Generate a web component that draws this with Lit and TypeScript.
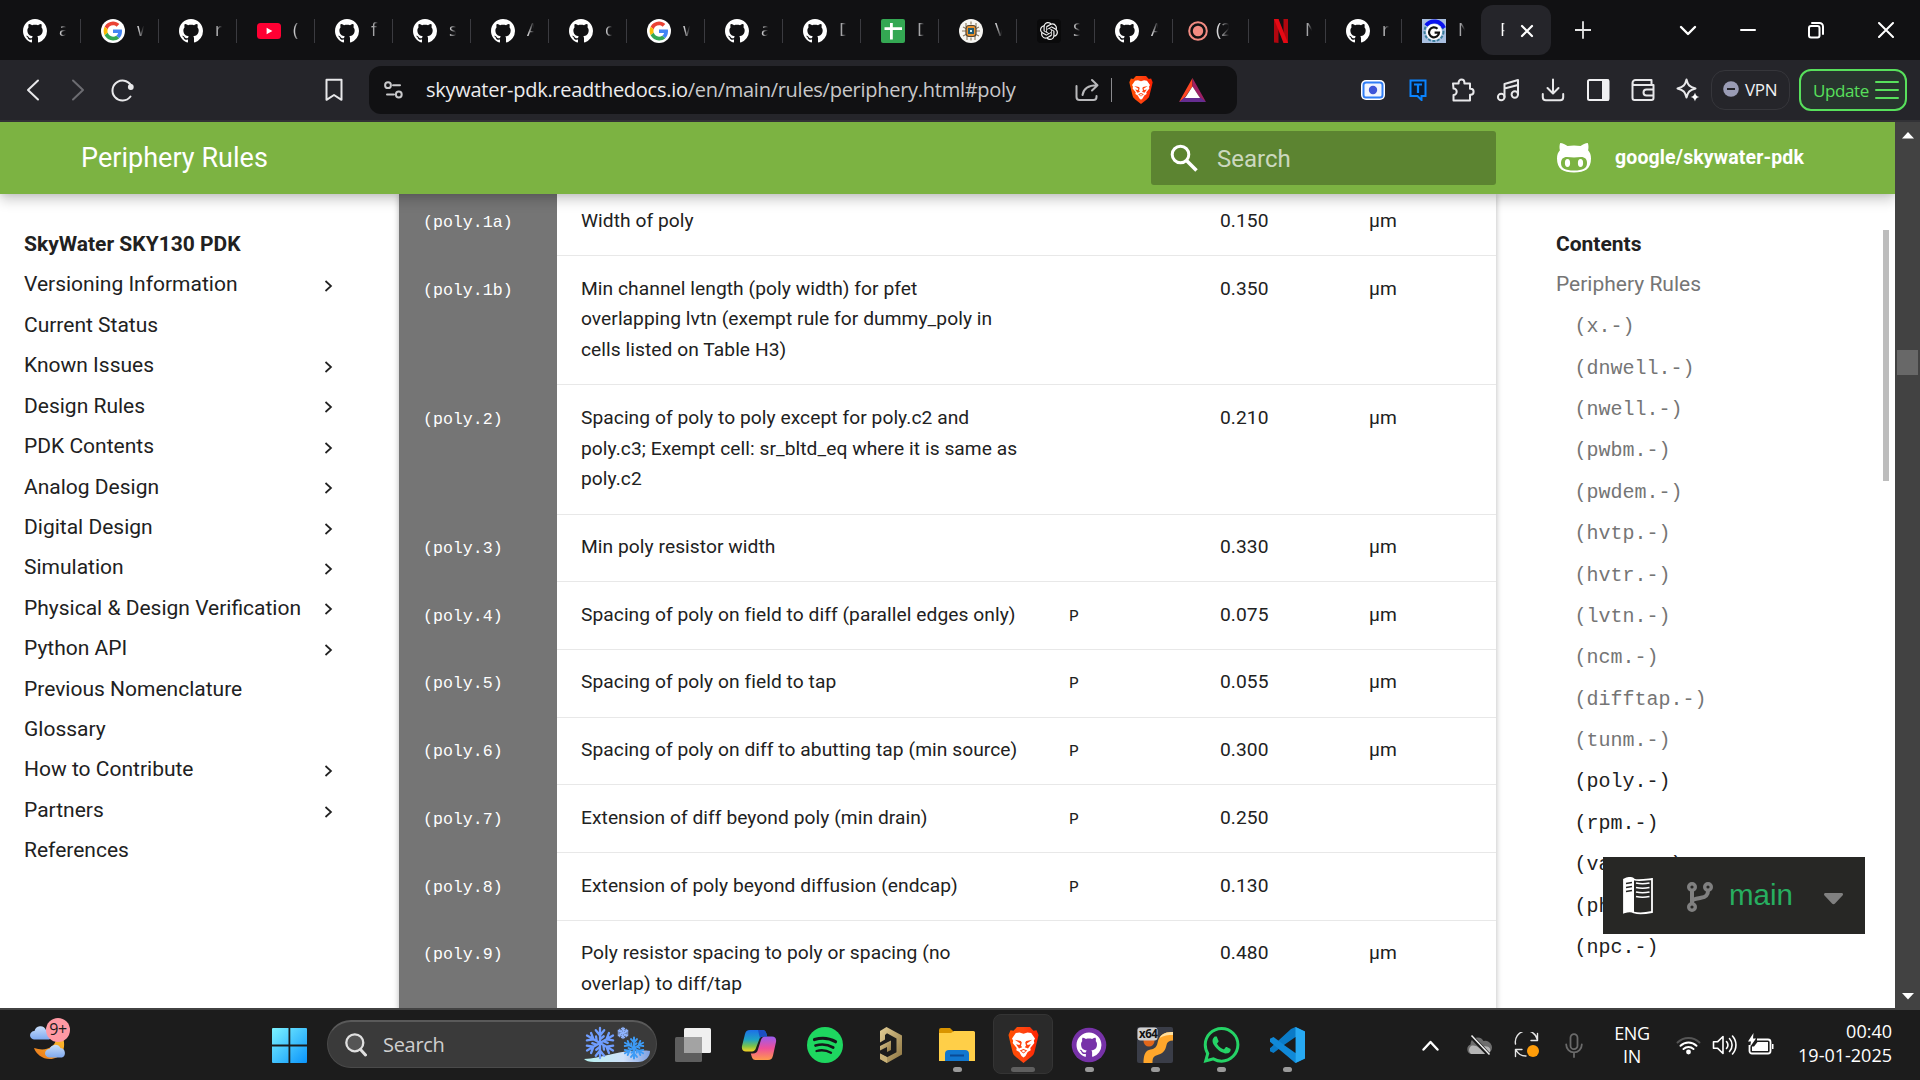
import { LitElement, html, css, svg, nothing, TemplateResult } from "lit";
import { customElement } from "lit/decorators.js";
import { classMap } from "lit/directives/class-map.js";

const GH =
  "M8 0C3.58 0 0 3.58 0 8c0 3.54 2.29 6.53 5.47 7.59.4.07.55-.17.55-.38 0-.19-.01-.82-.01-1.49-2.01.37-2.53-.49-2.69-.94-.09-.23-.48-.94-.82-1.13-.28-.15-.68-.52-.01-.53.63-.01 1.08.58 1.23.82.72 1.21 1.87.87 2.33.66.07-.52.28-.87.51-1.07-1.78-.2-3.64-.89-3.64-3.95 0-.87.31-1.59.82-2.15-.08-.2-.36-1.02.08-2.12 0 0 .67-.21 2.2.82.64-.18 1.32-.27 2-.27.68 0 1.36.09 2 .27 1.53-1.04 2.2-.82 2.2-.82.44 1.1.16 1.92.08 2.12.51.56.82 1.27.82 2.15 0 3.07-1.87 3.75-3.65 3.95.29.25.54.73.54 1.48 0 1.07-.01 1.93-.01 2.2 0 .21.15.46.55.38A8.013 8.013 0 0016 8c0-4.42-3.58-8-8-8z";
const OPENAI =
  "M22.2819 9.8211a5.9847 5.9847 0 0 0-.5157-4.9108 6.0462 6.0462 0 0 0-6.5098-2.9A6.0651 6.0651 0 0 0 4.9807 4.1818a5.9847 5.9847 0 0 0-3.9977 2.9 6.0462 6.0462 0 0 0 .7427 7.0966 5.98 5.98 0 0 0 .511 4.9107 6.051 6.051 0 0 0 6.5146 2.9001A5.9847 5.9847 0 0 0 13.2599 24a6.0557 6.0557 0 0 0 5.7718-4.2058 5.9894 5.9894 0 0 0 3.9977-2.9001 6.0557 6.0557 0 0 0-.7475-7.0729zm-9.022 12.6081a4.4755 4.4755 0 0 1-2.8764-1.0408l.1419-.0804 4.7783-2.7582a.7948.7948 0 0 0 .3927-.6813v-6.7369l2.02 1.1686a.071.071 0 0 1 .038.052v5.5826a4.504 4.504 0 0 1-4.4945 4.4944zm-9.6607-4.1254a4.4708 4.4708 0 0 1-.5346-3.0137l.142.0852 4.783 2.7582a.7712.7712 0 0 0 .7806 0l5.8428-3.3685v2.3324a.0804.0804 0 0 1-.0332.0615L9.74 19.9502a4.4992 4.4992 0 0 1-6.1408-1.6464zM2.3408 7.8956a4.485 4.485 0 0 1 2.3655-1.9728V11.6a.7664.7664 0 0 0 .3879.6765l5.8144 3.3543-2.0201 1.1685a.0757.0757 0 0 1-.071 0l-4.8303-2.7865A4.504 4.504 0 0 1 2.3408 7.872zm16.5963 3.8558L13.1038 8.364 15.1192 7.2a.0757.0757 0 0 1 .071 0l4.8303 2.7913a4.4944 4.4944 0 0 1-.6765 8.1042v-5.6772a.79.79 0 0 0-.407-.667zm2.0107-3.0231l-.142-.0852-4.7735-2.7818a.7759.7759 0 0 0-.7854 0L9.409 9.2297V6.8974a.0662.0662 0 0 1 .0284-.0615l4.8303-2.7866a4.4992 4.4992 0 0 1 6.6802 4.66zM8.3065 12.863l-2.02-1.1638a.0804.0804 0 0 1-.038-.0567V6.0742a4.4992 4.4992 0 0 1 7.3757-3.4537l-.142.0805L8.704 5.459a.7948.7948 0 0 0-.3927.6813zm1.0976-2.3654l2.602-1.4998 2.6069 1.4998v2.9994l-2.5974 1.4997-2.6067-1.4997Z";
const WHATSAPP =
  "M17.472 14.382c-.297-.149-1.758-.867-2.03-.967-.273-.099-.471-.148-.67.15-.197.297-.767.966-.94 1.164-.173.199-.347.223-.644.075-.297-.15-1.255-.463-2.39-1.475-.883-.788-1.48-1.761-1.653-2.059-.173-.297-.018-.458.13-.606.134-.133.298-.347.446-.52.149-.174.198-.298.298-.497.099-.198.05-.371-.025-.52-.075-.149-.669-1.612-.916-2.207-.242-.579-.487-.5-.669-.51-.173-.008-.371-.01-.57-.01-.198 0-.52.074-.792.372-.272.297-1.04 1.016-1.04 2.479 0 1.462 1.065 2.875 1.213 3.074.149.198 2.096 3.2 5.077 4.487.709.306 1.262.489 1.694.625.712.227 1.36.195 1.871.118.571-.085 1.758-.719 2.006-1.413.248-.694.248-1.289.173-1.413-.074-.124-.272-.198-.57-.347m-5.421 7.403h-.004a9.87 9.87 0 01-5.031-1.378l-.361-.214-3.741.982.998-3.648-.235-.374a9.86 9.86 0 01-1.51-5.26c.001-5.45 4.436-9.884 9.888-9.884 2.64 0 5.122 1.03 6.988 2.898a9.825 9.825 0 012.893 6.994c-.003 5.45-4.437 9.884-9.885 9.884m8.413-18.297A11.815 11.815 0 0012.05 0C5.495 0 .16 5.335.157 11.892c0 2.096.547 4.142 1.588 5.945L.057 24l6.305-1.654a11.882 11.882 0 005.683 1.448h.005c6.554 0 11.89-5.335 11.893-11.893a11.821 11.821 0 00-3.48-8.413Z";

const icon = (w: number, h: number, body: unknown, vb = `0 0 ${w} ${h}`) =>
  html`<svg width=${w} height=${h} viewBox=${vb} fill="none">${body}</svg>`;

const line = (d: string, color = "#e8e8ea", width = 2) =>
  svg`<path d=${d} stroke=${color} stroke-width=${width} stroke-linecap="round" stroke-linejoin="round"/>`;

const github = () => icon(24, 24, svg`<path fill="#fff" d=${GH}/>`, "0 0 16 16");
const google = () =>
  icon(24, 24, svg`<circle cx="12" cy="12" r="12" fill="#fff"/>
    <g transform="translate(2.6 2.6) scale(.392)">
    <path fill="#EA4335" d="M24 9.5c3.54 0 6.71 1.22 9.21 3.6l6.85-6.85C35.9 2.38 30.47 0 24 0 14.62 0 6.51 5.38 2.56 13.22l7.98 6.19C12.43 13.72 17.74 9.5 24 9.5z"/>
    <path fill="#4285F4" d="M46.98 24.55c0-1.57-.15-3.09-.38-4.55H24v9.02h12.94c-.58 2.96-2.26 5.48-4.78 7.18l7.73 6c4.51-4.18 7.09-10.36 7.09-17.65z"/>
    <path fill="#FBBC05" d="M10.53 28.59c-.48-1.45-.76-2.99-.76-4.59s.27-3.14.76-4.59l-7.98-6.19C.92 16.46 0 20.12 0 24c0 3.88.92 7.54 2.56 10.78l7.97-6.19z"/>
    <path fill="#34A853" d="M24 48c6.48 0 11.93-2.13 15.89-5.81l-7.73-6c-2.15 1.45-4.92 2.3-8.16 2.3-6.26 0-11.57-4.22-13.47-9.91l-7.98 6.19C6.51 42.62 14.62 48 24 48z"/></g>`);
const youtube = () =>
  icon(24, 24, svg`<rect x="0" y="4" width="24" height="16" rx="3.5" fill="#ff0033"/><path d="M9.6 8.8v6.4l5.8-3.2z" fill="#fff"/>`);
const sheets = () =>
  icon(24, 24, svg`<rect width="24" height="24" rx="2" fill="#34a853"/><path d="M3.5 9.7h17.5M10.4 4v16.5" stroke="#fff" stroke-width="2.8"/>`);
const chip = () =>
  icon(24, 24, svg`<circle cx="12" cy="12" r="12" fill="#f6f5f2"/>
    <path d="M7 4v4M4 8l4 2M3 12h4M4 17l4-2M8 21v-4M17 4v4M20 8l-4 2M21 12h-4M20 17l-4-2M16 21v-4M12 2.500v3M12 21.500v-3" stroke="#8b7a60" stroke-width="1.100"/>
    <rect x="7" y="6.500" width="10" height="11" rx="3" fill="#e8912d" stroke="#4d4438" stroke-width="1.200"/>
    <rect x="9" y="9" width="6" height="6" fill="#1f5a72"/><rect x="11" y="11" width="2" height="2" fill="#d6f0f4"/>`);
const openai = () =>
  icon(24, 24, svg`<rect width="24" height="24" rx="4" fill="#0a0a0b"/><g transform="translate(3 3) scale(.75)"><path fill="#f2f2f2" d=${OPENAI}/></g>`);
const record = () =>
  icon(20, 20, svg`<circle cx="10" cy="10" r="8.800" stroke="#f28b82" stroke-width="2"/><circle cx="10" cy="10" r="5.200" fill="#f28b82"/>`);
const netflix = () =>
  icon(16, 24, svg`<path d="M1 0h4.500v24L1 23.500zM10.500 0H15v24l-4.500-.5z" fill="#b1060f"/><path d="M1 0h4.500L15 24h-4.500z" fill="#e50914"/>`);
const gears = () =>
  icon(24, 24, svg`<rect width="24" height="24" fill="#a9bfe0"/><circle cx="12" cy="12.500" r="9.500" stroke="#3a7f9d" stroke-width="2" stroke-dasharray="3 1.500"/>
    <path d="M4 6.500A10.500 10.500 0 0 1 22 9" stroke="#0a12ee" stroke-width="4"/><circle cx="12" cy="13" r="8" fill="#fff"/>
    <path d="M15.500 9.800A5 5 0 1 0 17 13.600h-4.400" stroke="#111" stroke-width="2.200"/>`);

const lion = (w: number, h: number) =>
  icon(w, h, svg`<defs><linearGradient id="lg" x1="0" x2="1"><stop offset="0" stop-color="#ff5000"/><stop offset=".5" stop-color="#ff4410"/><stop offset="1" stop-color="#ff2000"/></linearGradient></defs>
    <path fill="url(#lg)" d="M8.500 0h13L25 3.700l3-.4L30 8l-1 4.500-3.200 13c-.5 2-1.500 3-3 4.300L15 36l-7.800-6.200c-1.500-1.300-2.500-2.300-3-4.300L1 12.500 0 8l2-4.700 3 .4z"/>
    <path fill="#fff" d="M15 6.800l-4-1.300-3.700.6L3.500 11.500l1.200 2.300-.5 2.200 4 5-.4 2.300 3 1.800L13 29l2 1.400L17 29l2.200-3.900 3-1.800-.4-2.300 4-5-.5-2.200 1.200-2.300-3.800-5.400-3.700-.6z"/>
    <path fill="#ff4410" d="M6.300 12.800l6 1.300 1 1.300-.8 3.400 1.200 1.400-3.200 1.300-3-4.200 3.400.7.800-1.600zM23.700 12.800l-6 1.300-1 1.300.8 3.400-1.200 1.400 3.200 1.300 3-4.200-3.400.7-.8-1.600zM11.300 23.600l3.700-1.700 3.700 1.700-3.700 2.900z"/>
    <path fill="#fff" d="M12.900 24l2.100-1 2.100 1-2.100 1.500z"/>`, "0 0 30 36");

const TABS: Array<[() => TemplateResult, string]> = [
  [github, "a"], [google, "w"], [github, "r"], [youtube, "("], [github, "f"], [github, "s"],
  [github, "A"], [github, "c"], [google, "w"], [github, "a"], [github, "D"], [sheets, "D"],
  [chip, "V"], [openai, "S"], [github, "A"], [record, "(2"], [netflix, "N"], [github, "r"], [gears, "N"],
];

const NAV: Array<[string, boolean]> = [
  ["Versioning Information", true], ["Current Status", false], ["Known Issues", true], ["Design Rules", true],
  ["PDK Contents", true], ["Analog Design", true], ["Digital Design", true], ["Simulation", true],
  ["Physical & Design Verification", true], ["Python API", true], ["Previous Nomenclature", false],
  ["Glossary", false], ["How to Contribute", true], ["Partners", true], ["References", false],
];

const RULES: Array<[string, string[], string, string, string]> = [
  ["(poly.1a)", ["Width of poly"], "", "0.150", "µm"],
  ["(poly.1b)", ["Min channel length (poly width) for pfet", "overlapping lvtn (exempt rule for dummy_poly in", "cells listed on Table H3)"], "", "0.350", "µm"],
  ["(poly.2)", ["Spacing of poly to poly except for poly.c2 and", "poly.c3; Exempt cell: sr_bltd_eq where it is same as", "poly.c2"], "", "0.210", "µm"],
  ["(poly.3)", ["Min poly resistor width"], "", "0.330", "µm"],
  ["(poly.4)", ["Spacing of poly on field to diff (parallel edges only)"], "P", "0.075", "µm"],
  ["(poly.5)", ["Spacing of poly on field to tap"], "P", "0.055", "µm"],
  ["(poly.6)", ["Spacing of poly on diff to abutting tap (min source)"], "P", "0.300", "µm"],
  ["(poly.7)", ["Extension of diff beyond poly (min drain)"], "P", "0.250", ""],
  ["(poly.8)", ["Extension of poly beyond diffusion (endcap)"], "P", "0.130", ""],
  ["(poly.9)", ["Poly resistor spacing to poly or spacing (no", "overlap) to diff/tap"], "", "0.480", "µm"],
];

const TOC: Array<[string, boolean]> = [
  ["(x.-)", true], ["(dnwell.-)", true], ["(nwell.-)", true], ["(pwbm.-)", true], ["(pwdem.-)", true],
  ["(hvtp.-)", true], ["(hvtr.-)", true], ["(lvtn.-)", true], ["(ncm.-)", true], ["(difftap.-)", true],
  ["(tunm.-)", true], ["(poly.-)", false], ["(rpm.-)", false], ["(varac.-)", false], ["(photo.-)", false], ["(npc.-)", false],
];

const TOOLS = [
  icon(24, 20, svg`<rect width="24" height="20" rx="5" fill="#fff"/><rect x="2.500" y="2.500" width="19" height="15" rx="2.500" fill="#f1f5ff" stroke="#2f7df6" stroke-width="2"/><circle cx="12" cy="10" r="4.200" fill="#3f56d8"/>`),
  icon(18, 22, svg`<path d="M1.500 1.500h15v15.500h-4v4l-4-4h-7z" fill="#0b1a30" stroke="#0a84ff" stroke-width="2"/><path d="M5 5.500h8M9 5.500v8.500" stroke="#0a84ff" stroke-width="2.200"/>`),
  icon(24, 24, line("M2 5.500h5.600V4.500a2.900 2.900 0 0 1 5.800 0v1H19v5.300h.6a3 3 0 0 1 0 6H19V22.500H2.500V17a3.200 3.200 0 0 0 0-6.400z")),
  icon(24, 24, svg`${line("M8.500 19V6L22 2v14M8.500 10.500L22 7")}<circle cx="5.200" cy="19" r="3.300" stroke="#e8e8ea" stroke-width="2"/><circle cx="18.800" cy="16.500" r="3.200" stroke="#e8e8ea" stroke-width="2"/>`),
  icon(24, 24, line("M12 1.500V15M6.500 10l5.500 5.500L17.500 10M1.800 16v3.200a3 3 0 0 0 3 3h14.400a3 3 0 0 0 3-3V16")),
  icon(24, 24, svg`<rect x="2" y="2" width="20.500" height="20" rx="1.500" stroke="#f0f0f2" stroke-width="2"/><rect x="16" y="1.500" width="7" height="21" fill="#f0f0f2"/>`),
  icon(24, 24, line("M20.500 7V2H4.500a3 3 0 0 0-3 3v15a2 2 0 0 0 2 2h17a2 2 0 0 0 2-2V7H3.500a2 2 0 0 1-2-2M22.500 11.500h-7a3 3 0 0 0 0 6h7")),
  icon(24, 24, svg`${line("M10.500 1.500c1.300 5.500 3 7.300 9 9-6 1.700-7.700 3.500-9 9-1.300-5.500-3-7.300-9-9 6-1.700 7.700-3.500 9-9z")}<path d="M19 14.500c.8 3 1.500 3.700 4.500 4.500-3 .8-3.700 1.500-4.500 4.500-.8-3-1.500-3.700-4.500-4.500 3-.8 3.700-1.500 4.500-4.500z" fill="#fff"/>`),
];

const flake = (x: number, y: number, r: number, color: string, w: number) => svg`<g transform="translate(${x} ${y})" stroke=${color} stroke-width=${w} stroke-linecap="round">
  ${[0, 60, 120, 180, 240, 300].map((a) => svg`<path transform="rotate(${a})" d="M0 0V${-r}M0 ${-r * 0.5}L${r * 0.28} ${-r * 0.85}M0 ${-r * 0.5}L${-r * 0.28} ${-r * 0.85}M0 ${-r * 0.25}L${r * 0.25} ${-r * 0.45}"/>`)}</g>`;

const APPS: Array<[TemplateResult, string]> = [
  [icon(36, 36, svg`<rect x="9" y="1" width="27" height="25" rx="1.500" fill="#f0f0f0"/><rect y="10" width="27" height="25" rx="1.500" fill="#5e5e5e"/><path d="M9 10h18v16H9z" fill="#a3a3a3"/>`), ""],
  [icon(36, 36, svg`<defs><linearGradient id="c1" x1="0" y1="0" x2="0" y2="1"><stop offset="0" stop-color="#1d6fe8"/><stop offset=".45" stop-color="#1fa3c4"/><stop offset=".75" stop-color="#7cc24a"/><stop offset="1" stop-color="#f7d323"/></linearGradient>
    <linearGradient id="c2" x1="0" y1="0" x2="0" y2="1"><stop offset="0" stop-color="#9a5cf0"/><stop offset=".5" stop-color="#ee4f9a"/><stop offset="1" stop-color="#ff9a4d"/></linearGradient></defs>
    <path d="M9 3h12.500c2 0 3 1 3.700 3l1 3.500h-4c-2.200 0-3.400 1-4 3L15 21c-.7 2.300-2 3.500-4 3.500H5c-3 0-4.600-1.500-4-5.500L4 7c.7-2.500 2-4 5-4z" fill="url(#c1)"/>
    <path d="M27 33H14.500c-2 0-3-1-3.700-3l-1-3.500h2c3.200 0 4.400-1.500 5-3.500l3-9.500c.7-2.500 2-4 4.500-4H31c3 0 4.600 2 4 5.500l-3 13.500c-.7 3-2 4.500-5 4.500z" fill="url(#c2)"/>
    <path d="M17 3h4.500c2 0 3 1 3.700 3l1 3.500h-4c-1.600 0-2.600.5-3.300 1.600z" fill="#1b4fc4"/>`), ""],
  [icon(36, 36, svg`<circle cx="18" cy="18" r="18" fill="#1ed760"/>${line("M7.500 12.500c7-2 15-1.300 21 2.200", "#15161a", 3.2)}${line("M8.500 18.500c6-1.700 12.500-1 17.700 2", "#15161a", 2.7)}${line("M9.500 24c5-1.400 10-.8 14.500 1.700", "#15161a", 2.3)}`), ""],
  [icon(24, 36, svg`<defs><linearGradient id="al" x1="0" y1="0" x2="1" y2="1"><stop offset="0" stop-color="#e2cd95"/><stop offset="1" stop-color="#8c7440"/></linearGradient></defs>
    <path d="M7.500 0L23 8.500v19L8 36l-7-4v-5.500l7 3.700 9.500-5V11.500L8 6.200 6 8v4.500l-5 3V4z" fill="url(#al)"/><path d="M12 13.500v9.500L8 25v-5l-7 3.500v-4.500z" fill="url(#al)"/><path d="M1 26.500V32l7 4v-6z" fill="#c9b278"/>`), ""],
  [icon(36, 34, svg`<path d="M0 2a2 2 0 0 1 2-2h9l4 4h19a2 2 0 0 1 2 2v6H0z" fill="#d99400"/><path d="M0 5h12l3-2h19.500A1.500 1.500 0 0 1 36 4.500V33H0z" fill="#ffcf48"/><path d="M6 33v-7a4 4 0 0 1 4-4h16a4 4 0 0 1 4 4v7z" fill="#1177cf"/><path d="M11 27.500h14" stroke="#0a4a94" stroke-width="2"/>`), "dot"],
  [lion(31, 36), "active"],
  [icon(36, 36, svg`<circle cx="18" cy="18" r="17.300" fill="#7732a8"/><g transform="translate(5.500 5.500) scale(1.560)"><path fill="#fff" d=${GH}/></g>`), "dot"],
  [html`<span class="x64">${icon(36, 36, svg`<rect width="36" height="36" rx="2" fill="#3a3d48"/><path d="M36 5c-9 0-14 3-15.500 11-1 5-4 6-8.500 7-4 1-5.500 6-5.500 13h9c0-5 1-7 5-8 6-1.500 8-5 9-10 .6-3 2.500-4.500 6.500-4.500z" fill="#ffa62b"/><path d="M36 5c-6 0-11 1-13.500 6 4-2.500 9-3 13.500-3z" fill="#ffe0a0"/><circle cx="12" cy="14" r="5.500" fill="#e2661a"/><rect x=".5" y=".5" width="20" height="13" rx="3" fill="#cfcfcf"/>`)}<b>x64</b></span>`, "dot"],
  [icon(37, 36, svg`<path fill="#25d366" d=${WHATSAPP}/>`, "0 0 24 24"), "dot"],
  [icon(36, 36, svg`<path d="M26.500 0L36 4.500v27L26.500 36 11 21 4.500 26 1 24.200v-3L22 2z" fill="#0a7bc7"/><path d="M26.500 36L1 14.800v-3L4.500 10 26 26z" fill="#1089d8"/><path d="M26.500 0L36 4.500v27L26.500 36z" fill="#27a9f2"/><path d="M26.500 10v16L15 18z" fill="#1c1c1c"/>`), "dot"],
];

@customElement("app-root")
class AppRoot extends LitElement {
  static styles = css`
    :host { display: block; width: 1920px; height: 1080px; overflow: hidden; background: #fff; font-family: Roboto, sans-serif; color: #212121; }
    * { box-sizing: border-box; }
    svg { display: block; flex: none; }
    .screen { display: flex; flex-direction: column; height: 1080px; }
    .ui { font-family: "Open Sans", "Noto Sans", sans-serif; }

    /* browser tabs */
    .tabs { display: flex; align-items: center; height: 60px; background: #111113; color: #d6d6d8; flex: none; }
    .tab { display: flex; align-items: center; width: 78px; height: 46px; padding: 2px 0 0 23px; font-size: 18px; flex: none; }
    .tab.rec { width: 76px; padding-left: 18px; }
    .tab.nf { width: 77px; padding-left: 27px; }
    .tab.late { width: 76px; }
    .tab.last { width: 82px; }
    .tab .letter { width: 16px; height: 28px; line-height: 24px; margin: 0 -4px 0 12px; white-space: nowrap; -webkit-mask-image: linear-gradient(90deg, #000 1px, transparent 7px); mask-image: linear-gradient(90deg, #000 1px, transparent 7px); }
    .tab.rec .letter { width: 18px; margin-left: 8px; -webkit-mask-image: linear-gradient(90deg, #000 3px, transparent 13px); mask-image: linear-gradient(90deg, #000 3px, transparent 13px); }
    .tab.nf .letter { margin-left: 16px; }
    .tab .sep { width: 1px; height: 24px; background: #3b3b40; margin: 0 -3px 0 auto; }
    .active-tab { display: flex; align-items: center; width: 70px; height: 50px; border-radius: 12px; background: #25252a; padding-left: 19px; flex: none; font-size: 18px; }
    .active-tab .letter { width: 14px; line-height: 26px; height: 28px; color: #fff; -webkit-mask-image: linear-gradient(90deg, #000 3px, transparent 5px); mask-image: linear-gradient(90deg, #000 3px, transparent 5px); }
    .active-tab svg { margin: 1px 0 0 6px; }
    .winctl { display: flex; align-items: center; flex: 1; }
    .winctl .c { display: flex; justify-content: center; }
    .winctl .min { margin-left: -12px; }

    /* toolbar */
    .bar { display: flex; align-items: center; height: 62px; background: #25252a; border-bottom: 2px solid #323236; flex: none; }
    .navbtns { display: flex; align-items: center; width: 369px; padding-left: 26px; }
    .url { display: flex; align-items: center; width: 868px; height: 48px; border-radius: 12px; background: #111113; padding: 0 29px 0 15px; font-size: 20px; color: #c8c8ca; white-space: nowrap; }
    .url .host { color: #ececee; }
    .url .addr { width: 634px; margin-left: 23px; line-height: 46px; height: 46px; letter-spacing: -.27px; }
    .url .vr { width: 1px; height: 24px; background: #8a8a8e; margin: 0 17px 0 12px; }
    .url .bat { margin-left: 26px; }
    .tools { display: flex; margin-left: 113px; }
    .tool { width: 45px; display: flex; justify-content: center; align-items: center; height: 30px; }
    .vpn { display: flex; align-items: center; width: 79px; height: 40px; border: 1px solid #36363b; border-radius: 14px; margin-left: 1px; padding: 0 0 2px 11px; gap: 6px; font-size: 17px; color: #f1f1f3; letter-spacing: -.3px; }
    .update { display: flex; align-items: center; width: 108px; height: 42px; margin-left: 9px; border: 2px solid #58e05c; border-radius: 12px; background: #28352e; color: #58e05c; font-size: 17px; padding-left: 12px; gap: 6px; letter-spacing: -.4px; }

    /* page */
    .page { display: flex; height: 886px; flex: none; }
    .doc { width: 1895px; display: flex; flex-direction: column; overflow: hidden; }
    .head { display: flex; align-items: center; height: 72px; background: #7cb342; color: #fff; flex: none; box-shadow: 0 0 6px rgba(0,0,0,.1), 0 6px 12px rgba(0,0,0,.2); z-index: 2; padding-left: 81px; }
    .title { font-size: 27px; width: 1070px; line-height: 72px; letter-spacing: .03px; }
    .search { display: flex; align-items: center; width: 345px; height: 54px; border-radius: 3px; background: #5c8431; padding-left: 19px; font-size: 24px; color: rgba(255,255,255,.7); }
    .search span { margin: 1px 0 0 19px; }
    .repo { display: flex; align-items: center; margin-left: 61px; font-size: 19.500px; font-weight: 700; letter-spacing: .13px; }
    .repo span { margin: -2px 0 0 24px; }
    .body { display: flex; flex: 1; min-height: 0; }
    .side { width: 399px; padding: 37px 0 0 24px; font-size: 21px; line-height: 27.300px; flex: none; }
    .side .row { display: flex; justify-content: space-between; align-items: center; width: 309px; margin-top: 13.125px; }
    .side b, .toc b { display: block; font-weight: 700; }
    .side svg { margin-top: 2px; }

    .content { width: 1097px; flex: none; overflow: hidden; box-shadow: 0 0 6px rgba(0,0,0,.28); height: 820px; }
    .rule { display: grid; grid-template-columns: 158px 488px 151px 149px 151px; font-size: 19.200px; line-height: 30.720px; letter-spacing: .06px; }
    .rule > div { padding: 17.500px 0 18.500px 24px; border-top: 1px solid #e8e8e8; white-space: nowrap; }
    .rule:first-child > div { border-top: none; padding-top: 12px; }
    .rule .name { background: #757575; border-top-color: #757575; color: #fff; }
    .mono { font-family: "Liberation Mono", monospace; font-size: 16.600px; line-height: 1; letter-spacing: 0; }

    .toc { flex: 1; padding: 37px 0 0 60px; font-size: 21px; line-height: 27.300px; position: relative; }
    .toc .first { margin: 13.125px 0 14.600px; color: #757575; }
    .toc .item { font-family: "Liberation Mono", monospace; font-size: 20px; line-height: 28px; margin: 0 0 13.380px 18.500px; }
    .toc .grey { color: #757575; }
    .toc .track { position: absolute; left: 387px; top: 36px; width: 6px; height: 251px; background: #bdbdbd; }
    .badge { position: absolute; left: 107px; top: 663px; width: 262px; height: 77px; background: #272725; display: flex; align-items: center; padding-left: 20px; font-family: "Liberation Sans", Arial, sans-serif; font-size: 29.500px; color: #27ae60; }
    .badge .branch { margin: 2px 0 0 33px; }
    .badge .name { margin: -2px 0 0 15px; width: 95px; }
    .badge .caret { margin-top: 7px; }
    .scroll { width: 25px; background: #424242; display: flex; flex-direction: column; align-items: center; padding-top: 10px; }
    .scroll .thumb { width: 21px; height: 25px; background: #686868; margin-top: 211px; }
    .scroll .down { margin: 618px 0 0; }

    /* taskbar */
    .task { display: flex; align-items: center; height: 72px; background: #1c1c1c; border-top: 2px solid #424242; color: #fff; flex: none; }
    .weather { width: 42px; height: 42px; margin: 0 0 12px 30px; position: relative; }
    .weather .count { position: absolute; left: 16px; top: 0; width: 24px; height: 24px; border-radius: 50%; background: #ff99a4; color: #1c1c1c; font-size: 16px; line-height: 23px; text-align: center; letter-spacing: -.3px; }
    .win { margin-left: 200px; }
    .find { display: flex; align-items: center; width: 330px; height: 48px; margin: 0 0 2px 20px; border-radius: 24px; background: #3a3a3a; border: 1px solid #4a4a4a; border-top: 2px solid #5a5a5a; padding-left: 17px; font-size: 20px; color: #cfcfcf; letter-spacing: -.3px; }
    .find .txt { width: 202px; margin-left: 16px; }
    .find .txt + svg { margin-left: -1px; }
    .apps { display: flex; margin-left: 3px; }
    .app { width: 66px; height: 70px; padding: 4px 3px; }
    .app .cell { height: 60px; border-radius: 8px; display: flex; align-items: center; flex-direction: column; justify-content: space-between; padding: 12px 0 1px; border: 1px solid transparent; }
    .app.active .cell { background: #2a2a2a; border-color: #343434; }
    .app .mark { width: 9px; height: 5px; border-radius: 3px; }
    .app.dot .mark { background: #9a9a9a; }
    .app.active .mark { background: #5f5f5f; width: 24px; }
    .app .ic { height: 36px; display: flex; align-items: center; }
    .x64 { display: flex; position: relative; }
    .x64 b { position: absolute; left: 2px; top: 0; font-size: 11.500px; line-height: 14px; color: #111; letter-spacing: -.5px; }
    .tray { display: flex; align-items: center; margin-left: 102px; flex: 1; }
    .lang, .clock { font-size: 18px; line-height: 24px; }
    .lang { width: 50px; text-align: center; margin: -1px 0 0 24px; letter-spacing: -.3px; line-height: 22.500px; }
    .clock { margin-left: auto; text-align: right; padding-right: 28px; letter-spacing: 0; margin-top: -4px; }
    .g0 { width: 0; } .g11 { width: 11px; } .g15 { width: 15px; } .g19 { width: 19px; } .g22 { width: 22px; }
    .g25 { width: 25px; } .g26 { width: 26px; } .g27 { width: 27px; } .g31 { width: 31px; } .g64 { width: 64px; }
    .g6 { width: 6px; } .g135 { width: 135px; } .g145 { width: 145px; } .g191 { width: 191px; }
  `;

  private tab(fav: () => TemplateResult, letter: string, i: number) {
    const cls = { tab: true, rec: i === 15, nf: i === 16, late: i === 17, last: i === 18 };
    return html`<div class=${classMap(cls)}>${fav()}<span class="letter">${letter}</span>${i < 18 ? html`<span class="sep"></span>` : nothing}</div>`;
  }

  render() {
    return html`<div class="screen">
      <div class="tabs ui">
        ${TABS.map(([f, l], i) => this.tab(f, l, i))}
        <div class="active-tab"><span class="letter">P</span>${icon(14, 14, line("M2 2l10 10M12 2L2 12", "#fff", 2.2))}</div>
        <div class="winctl">
          <div class="c g64">${icon(16, 20, line("M8 2v16M0 10h16", "#e6e6e6", 1.8))}</div>
          <div class="c g145">${icon(18, 14, line("M2 4l7 7 7-7", "#fff", 2.4))}</div>
          <div class="c g0 min">${icon(16, 4, line("M1 2h14", "#fff", 2))}</div>
          <div class="c g135">${icon(18, 18, svg`<rect x="2" y="5" width="10.500" height="11.500" rx="2" stroke="#fff" stroke-width="2"/>${line("M5 2h7.500a3.500 3.500 0 0 1 3.500 3.500V13", "#fff", 2)}`)}</div>
          <div class="c g6">${icon(16, 16, line("M1 1l14 14M15 1L1 15", "#fff", 2))}</div>
        </div>
      </div>

      <div class="bar ui">
        <div class="navbtns">
          ${icon(14, 22, line("M12 1.500L2 11l10 9.500"))}
          <span class="g31"></span>
          ${icon(14, 22, line("M2 1.500L12 11 2 20.500", "#6c6c71"))}
          <span class="g25"></span>
          ${icon(24, 24, svg`${line("M20.500 18.500A10 10 0 1 1 22 9.500")}<circle cx="20.800" cy="9" r="2.900" fill="#e8e8ea"/>`)}
          <span class="g191"></span>
          ${icon(18, 24, line("M1.500 1.800h15v20L9 17l-7.500 4.800z"))}
        </div>
        <div class="url">
          ${icon(19, 18, svg`<circle cx="4" cy="4.200" r="2.900" stroke="#c9c9cb" stroke-width="2"/>${line("M9 4.200h7M3 13.500h7", "#c9c9cb")}<circle cx="14.800" cy="13.500" r="2.900" stroke="#c9c9cb" stroke-width="2"/>`)}
          <span class="addr"><span class="host">skywater-pdk.readthedocs.io</span>/en/main/rules/periphery.html#poly</span>
          <span class="g15"></span>
          ${icon(24, 24, line("M1.500 8v11a3 3 0 0 0 3 3h14a3 3 0 0 0 3-3v-1M17 2l5.500 5.200L17 12.500M22 7.200c-8 0-13.500 2.800-14.500 9.800", "#b9b9bb"))}
          <span class="vr"></span>
          ${lion(24, 28)}
          <span class="bat">${icon(27, 24, svg`<path d="M13.500 0v8.500L5.500 20 0 24z" fill="#ff4724"/><path d="M13.500 0L27 24l-6-4-7.500-11.500z" fill="#9e1f63"/><path d="M0 24l6-5h15l6 5z" fill="#662d91"/><path d="M13.500 8.500L21 20H6z" fill="#fff"/>`)}</span>
        </div>
        <div class="tools">${TOOLS.map((t) => html`<div class="tool">${t}</div>`)}</div>
        <div class="vpn">${icon(16, 16, svg`<circle cx="8" cy="8" r="7.800" fill="#9a9cb5"/><path d="M4 8h8" stroke="#25252a" stroke-width="2"/>`)}VPN</div>
        <div class="update">Update${icon(24, 20, line("M1 2h22M1 10h22M1 18h22", "#58e05c", 2))}</div>
      </div>

      <div class="page">
        <div class="doc">
          <div class="head">
            <div class="title">Periphery Rules</div>
            <div class="search">${icon(28, 28, svg`<circle cx="10.500" cy="10.500" r="8.300" stroke="#fff" stroke-width="3"/><path d="M16.500 16.500l10 10" stroke="#fff" stroke-width="3.600"/>`)}<span>Search</span></div>
            <div class="repo">${icon(34, 30, svg`<path fill="#fff" fill-rule="evenodd" d="M3.200 0C5.500 0 8.500 1.500 10.500 3c4-.8 9-.8 13 0 2-1.500 5-3 7.300-3 .9 2.500.9 5 .3 7.300C33 9.500 34 12 34 15.500 34 26 28 29.500 17 29.500S0 26 0 15.500C0 12 1 9.500 2.900 7.300 2.300 5 2.300 2.500 3.200 0zM10 14c-4 0-6 2.200-6 6 0 5.500 4 7.500 13 7.500s13-2 13-7.500c0-3.800-2-6-6-6-2.500 0-4.500.4-7 .4S12.500 14 10 14z"/><ellipse cx="10.500" cy="20" rx="2.600" ry="4" fill="#fff"/><ellipse cx="23.500" cy="20" rx="2.600" ry="4" fill="#fff"/>`)}<span>google/skywater-pdk</span></div>
          </div>
          <div class="body">
            <div class="side"><b>SkyWater SKY130 PDK</b>
              ${NAV.map(([t, more]) => html`<div class="row"><span>${t}</span>${more ? icon(10, 14, svg`<path d="M2.500 2L8 7l-5.500 5" stroke="#212121" stroke-width="1.700"/>`) : nothing}</div>`)}
            </div>
            <div class="content">
              ${RULES.map(([n, d, p, v, u]) => html`<div class="rule"><div class="name"><span class="mono">${n}</span></div><div>${d.map((s, i) => html`${i ? html`<br />` : nothing}${s}`)}</div><div><span class="mono">${p}</span></div><div>${v}</div><div>${u}</div></div>`)}
            </div>
            <div class="toc"><b>Contents</b><div class="first">Periphery Rules</div>
              ${TOC.map(([t, g]) => html`<div class=${classMap({ item: true, grey: g })}>${t}</div>`)}
              <div class="track"></div>
              <div class="badge">
                ${icon(30, 38, svg`<path d="M1 2.500C5 .5 9 .5 11 2.500c4 1.500 13 0 18-.5v33c-5 1-13 2-18 .5-2-1.500-6-1.500-10 0z" stroke="#fff" stroke-width="1.800"/><path d="M1 2.500C5 .5 9 .5 11 2.500v33c-2-1.500-6-1.500-10 0z" fill="#fff"/><path d="M3 6.500l6-1M3 10.500l6-1M3 14.500l6-1" stroke="#272725" stroke-width="1.500"/><path d="M13 6c4 1 9 1 13.500 0M13 10.500c4 1 9 1 13.500 0M13 15c4 1 9 1 13.500 0M13 19.500c4 1 9 1 13.500 0" stroke="#fff" stroke-width="1.600"/>`)}
                <span class="branch">${icon(28, 32, svg`<circle cx="6" cy="6" r="3.300" stroke="#808080" stroke-width="3.400"/><circle cx="22" cy="6" r="3.300" stroke="#808080" stroke-width="3.400"/><circle cx="6" cy="26" r="3.300" stroke="#808080" stroke-width="3.400"/><path d="M6 9.500v13M22 9.500c0 4.500-2 6.500-7 7.300-4.500.8-7 .9-9 2.700" stroke="#808080" stroke-width="4"/>`)}</span>
                <span class="name">main</span>
                <span class="caret">${icon(19, 12, svg`<path d="M1.500 0h16c1.500 0 2 1.500 1 2.500l-7.500 8c-.9.900-2.100.9-3 0l-7.500-8C-.4 1.500.1 0 1.500 0z" fill="#808080"/>`)}</span>
              </div>
            </div>
          </div>
        </div>
        <div class="scroll">${icon(12, 7, svg`<path d="M6 0l6 6.500H0z" fill="#fff"/>`)}<div class="thumb"></div><div class="down">${icon(12, 7, svg`<path d="M6 6.500L12 0H0z" fill="#fff"/>`)}</div></div>
      </div>

      <div class="task ui">
        <div class="weather">${icon(42, 42, svg`<defs><linearGradient id="mo" x1="1" y1="0" x2="0" y2="1"><stop offset="0" stop-color="#ffc02e"/><stop offset="1" stop-color="#e8741c"/></linearGradient><linearGradient id="cl" x1="0" y1="0" x2="0" y2="1"><stop offset="0" stop-color="#c8defa"/><stop offset="1" stop-color="#7fa9ee"/></linearGradient></defs>
            <path d="M33 20c4 12-3 21-13 21-8 0-14-5-16-11 12 4 22-1 22-10z" fill="url(#mo)"/>
            <path d="M4 21.500a4.200 4.200 0 0 1 .5-8.400A6 6 0 0 1 16 12a5 5 0 0 1 3 9.500z" fill="url(#cl)"/>
            <path d="M19 39.500a4.200 4.200 0 0 1 .5-8.400A6 6 0 0 1 30.500 30a5 5 0 0 1 1.500 9.500z" fill="url(#cl)"/>`)}<span class="count">9+</span></div>
        <div class="win">${icon(35, 35, svg`<defs><linearGradient id="wn" x1="0" y1="0" x2="35" y2="35" gradientUnits="userSpaceOnUse"><stop offset="0" stop-color="#7cf3ff"/><stop offset="1" stop-color="#0a94fb"/></linearGradient></defs><path fill="url(#wn)" d="M1 0h15.500v16.500H0V1a1 1 0 0 1 1-1zM18.300 0H34a1 1 0 0 1 1 1v15.500H18.300zM0 18.500h16.500V35H1a1 1 0 0 1-1-1zM18.300 18.500H35V34a1 1 0 0 1-1 1H18.300z"/>`)}</div>
        <div class="find">${icon(22, 24, svg`<circle cx="9.800" cy="9.800" r="8.500" stroke="#e0e0e0" stroke-width="2.300" fill="#555"/><path d="M15.500 16.500l5 5.500" stroke="#e0e0e0" stroke-width="3" stroke-linecap="round"/>`)}<span class="txt">Search</span>
          ${icon(68, 38, svg`<defs><linearGradient id="sn" x1="0" x2="1"><stop offset="0" stop-color="#b8f2f0"/><stop offset=".6" stop-color="#cfe0f8"/><stop offset="1" stop-color="#7fa0e0"/></linearGradient></defs><path d="M0 33c18-1 30-7 48-8 9-.500 16-1 18 0 0 6-5 11-12 11H10c-5 0-8-1-10-3z" fill="url(#sn)"/>${flake(16, 17, 15, "#6f9dff", 2.3)}${flake(39, 7, 5.5, "#8fb4ff", 1.3)}${flake(50, 22, 10.5, "#3d9bf5", 2)}`)}</div>
        <div class="apps">${APPS.map(([ic, c]) => html`<div class="app ${c}"><div class="cell"><div class="ic">${ic}</div><span class="mark"></span></div></div>`)}</div>
        <div class="tray">
          ${icon(17, 11, line("M1.500 9.500l7-7.500 7 7.500", "#fff", 2.4))}
          <span class="g27"></span>
          ${icon(26, 24, svg`<path d="M5 21a5 5 0 0 1-.5-9.500A7 7 0 0 1 17.500 8 6.500 6.500 0 0 1 21 21z" fill="#6d6d6d"/><path d="M5 21a5 5 0 0 1 0-8c3-1 6 0 9 2.500 3-3 8-3 10 0 1 3-.5 5.500-3 5.500z" fill="#b5b5b5"/><path d="M5 3l18 19" stroke="#1c1c1c" stroke-width="4"/><path d="M5.500 2.500l18 19" stroke="#f4f4f4" stroke-width="1.500"/>`)}
          <span class="g22"></span>
          ${icon(26, 26, svg`${line("M1.500 12A11 11 0 0 1 23.500 8M23.500 1.500V8.500H17M1.500 24.500V17.500H8M2 18a11 11 0 0 0 10 6", "#e6e6e6", 1.4)}<circle cx="19" cy="19" r="6" fill="#ff9d0a"/>`)}
          <span class="g25"></span>
          ${icon(18, 25, line("M9 1.200a3.500 3.500 0 0 1 3.500 3.500v8a3.500 3.500 0 0 1-7 0v-8A3.500 3.500 0 0 1 9 1.200zM1.200 11.500a7.800 7.800 0 0 0 15.600 0M9 19.500v4.500", "#6a6a6a", 1.8))}
          <div class="lang">ENG<br />IN</div>
          <span class="g19"></span>
          ${icon(25, 20, svg`${line("M1.500 7.500a15.500 15.500 0 0 1 22 0", "#555", 2)}${line("M4.500 10.800a11.500 11.500 0 0 1 16 0M7.500 14a7.500 7.500 0 0 1 10 0", "#fff", 2)}<circle cx="12.500" cy="17" r="2.400" fill="#fff"/>`)}
          <span class="g11"></span>
          ${icon(25, 22, line("M1.500 7.800h4L11 2.500v17l-5.500-5.300h-4zM14.500 7.500a5.500 5.500 0 0 1 0 7M17.500 4.500a9.500 9.500 0 0 1 0 13M20.500 2a13.500 13.500 0 0 1 0 18", "#fff", 1.6))}
          <span class="g11"></span>
          ${icon(26, 24, svg`<path d="M9 6.500h11a2.500 2.500 0 0 1 2.500 2.500v9a2.500 2.500 0 0 1-2.500 2.500H4A2.500 2.500 0 0 1 1.500 18v-6" stroke="#fff" stroke-width="1.800"/><path d="M9.500 9H20v9H4v-4.500h2z" fill="#fff"/><path d="M24 11h1.500v5H24z" fill="#fff"/><path d="M5.500 0L0 8.500h3L2 14l6-8.500H5z" fill="#fff"/>`)}
          <div class="clock">00:40<br />19-01-2025</div>
        </div>
      </div>
    </div>`;
  }
}
